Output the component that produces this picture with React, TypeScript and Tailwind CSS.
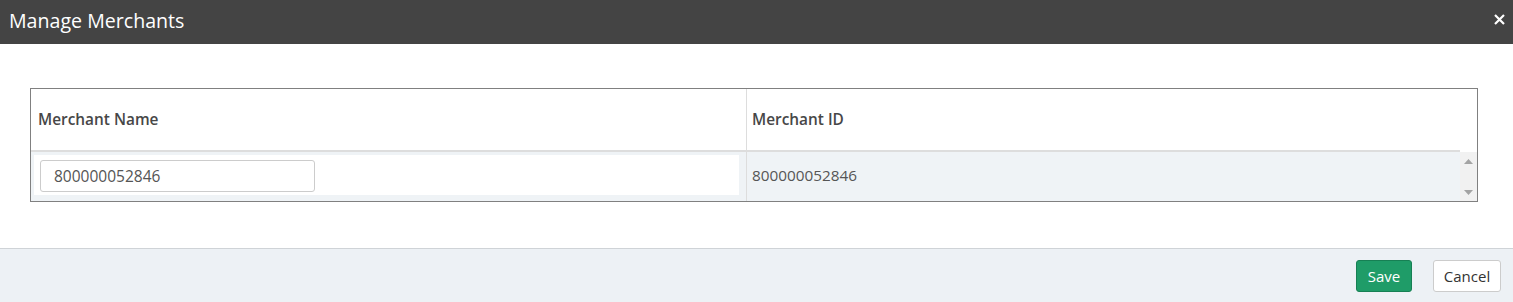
import React from "react";

const font = { fontFamily: '"Open Sans", "Noto Sans", sans-serif' };

const Scrollbar: React.FC = () => (
  <div className="w-[17px] bg-[#f1f1f1] flex flex-col justify-between items-center pt-[7px] pb-[6px]">
    <svg width="9" height="5" viewBox="0 0 9 5">
      <path d="M4.5 0 L9 5 L0 5 Z" fill="#a3a3a3" />
    </svg>
    <svg width="9" height="5" viewBox="0 0 9 5">
      <path d="M0 0 L9 0 L4.5 5 Z" fill="#a3a3a3" />
    </svg>
  </div>
);

export default function App() {
  return (
    <div className="w-[1513px] h-[302px] bg-white flex flex-col" style={font}>
      <div className="h-[44px] shrink-0 bg-[#444444] flex items-center justify-between pl-[9px] pr-[8px]">
        <span className="text-white text-[19.6px] leading-none pb-[2px]">Manage Merchants</span>
        <svg width="11" height="11" viewBox="0 0 11 11" className="mb-[5px]">
          <path d="M1 1 L10 10 M10 1 L1 10" stroke="#ffffff" strokeWidth="2.2" />
        </svg>
      </div>

      <div className="flex-1 pl-[30px] pr-[35px] pt-[44px]">
        <div className="border border-[#808080] flex flex-col">
          <div className="flex h-[63px] border-b-2 border-[#dddddd] mr-[17px]">
            <div className="w-[715px] flex items-center pl-[7px] text-[15.4px] font-semibold text-[#474747]">
              Merchant Name
            </div>
            <div className="flex-1 border-l border-[#dddddd] flex items-center pl-[5px] text-[15.4px] font-semibold text-[#474747]">
              Merchant ID
            </div>
          </div>
          <div className="flex h-[49px] bg-[#eff3f6]">
            <div className="w-[715px] p-[3px] pr-[7px]">
              <div className="bg-white h-[40px] pl-[6px] pt-[5px]">
                <input
                  readOnly
                  value="800000052846"
                  className="w-[275px] h-[32px] border border-[#cccccc] rounded-[3px] px-[13px] text-[15.5px] text-[#555555] outline-none"
                  style={font}
                />
              </div>
            </div>
            <div className="flex-1 border-l border-[#dddddd] flex items-center pl-[5px] pb-[2px] text-[15.3px] text-[#555555]">
              800000052846
            </div>
            <Scrollbar />
          </div>
        </div>
      </div>

      <div className="h-[54px] shrink-0 border-t border-[#cfd3d7] bg-[#edf1f5] flex items-center justify-end gap-[21px] pr-[12px] pt-[1px]">
        <button className="h-[32px] w-[56px] rounded-[3px] bg-[#1f9c68] border border-[#178054] text-white text-[15px]">
          Save
        </button>
        <button className="h-[32px] w-[68px] rounded-[3px] bg-white border border-[#cccccc] text-[#333333] text-[15px]">
          Cancel
        </button>
      </div>
    </div>
  );
}
